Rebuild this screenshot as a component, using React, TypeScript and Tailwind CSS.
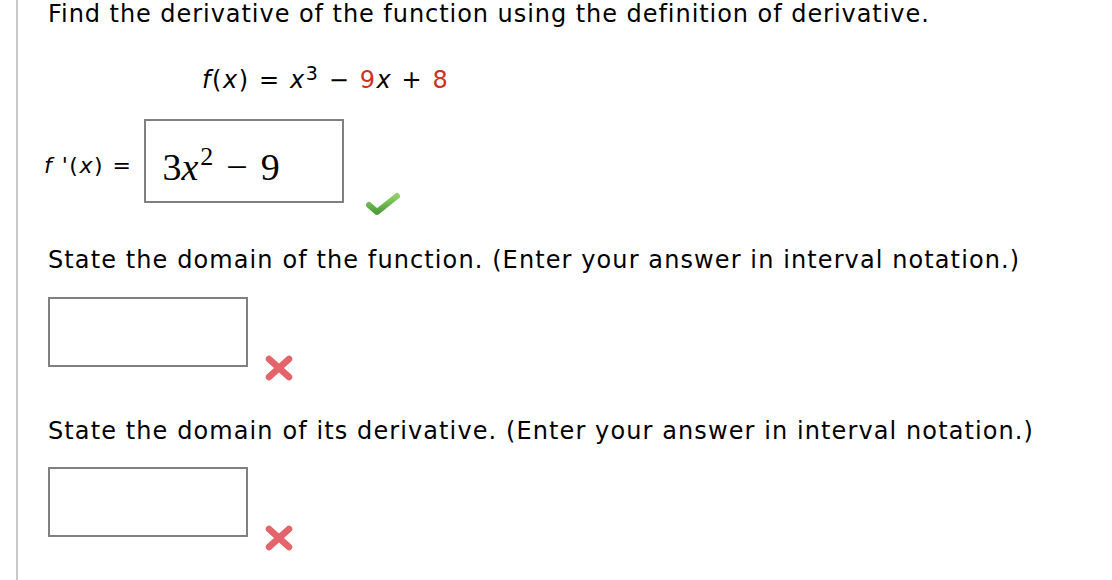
import React from "react";

const sans = { fontFamily: '"DejaVu Sans", Verdana, sans-serif' };

function Check() {
  return (
    <svg width="38" height="26" viewBox="0 0 38 26" className="block">
      <defs>
        <linearGradient id="cg" x1="0" y1="0" x2="0" y2="1">
          <stop offset="0" stopColor="#8fd16a" />
          <stop offset="1" stopColor="#4f9e3a" />
        </linearGradient>
      </defs>
      <path d="M5 14 L13 21 L33 5" fill="none" stroke="url(#cg)" strokeWidth="6" strokeLinecap="round" strokeLinejoin="round" />
    </svg>
  );
}

function Cross() {
  return (
    <svg width="30" height="28" viewBox="0 0 30 28" className="block">
      <g stroke="#e0545a" strokeWidth="6.5" strokeLinecap="round" opacity="0.9">
        <path d="M5 5 L25 23" />
        <path d="M25 5 L5 23" />
      </g>
    </svg>
  );
}

export default function App() {
  return (
    <div className="w-[1112px] min-h-[580px] bg-white text-black" style={sans}>
      <div className="ml-[16px] min-h-[580px] border-l-2 border-[#c8c8c8] pl-[30px]">
        <p className="text-[24px] leading-[28px] tracking-[0.95px] whitespace-nowrap">
          Find the derivative of the function using the definition of derivative.
        </p>

        <p className="mt-[38px] pl-[154px] text-[24px] leading-[28px] tracking-[1.6px] whitespace-nowrap">
          <span className="italic">f</span>(<span className="italic">x</span>) = <span className="italic">x</span>
          <span className="relative top-[-8px] text-[19px]">3</span> − <span className="text-[#cc3322]">9</span>
          <span className="italic">x</span> + <span className="text-[#cc3322]">8</span>
        </p>

        <div className="mt-[24px] flex items-start">
          <div className="mt-[35px] ml-[-4px] text-[22px] leading-[24px] tracking-[1.5px] whitespace-nowrap">
            <span className="italic">f</span> '(<span className="italic">x</span>) =
          </div>
          <div className="ml-[12px] h-[84px] w-[200px] border-2 border-[#808080] pl-[16px] pt-[26px]">
            <div
              className="text-[38px] leading-[40px] whitespace-nowrap"
              style={{ fontFamily: '"Liberation Serif", "Times New Roman", serif' }}
            >
              3<span className="italic">x</span>
              <span className="relative top-[-15px] ml-[2px] text-[26px]">2</span>
              <span className="mx-[13px]">−</span>9
            </div>
          </div>
          <div className="ml-[20px] mt-[72px]">
            <Check />
          </div>
        </div>

        <p className="mt-[29px] text-[24px] leading-[28px] tracking-[1.1px] whitespace-nowrap">
          State the domain of the function. (Enter your answer in interval notation.)
        </p>
        <div className="mt-[23px] flex items-start">
          <div className="h-[70px] w-[200px] border-2 border-[#808080]" />
          <div className="ml-[16px] mt-[57px]">
            <Cross />
          </div>
        </div>

        <p className="mt-[35px] text-[24px] leading-[28px] tracking-[1.1px] whitespace-nowrap">
          State the domain of its derivative. (Enter your answer in interval notation.)
        </p>
        <div className="mt-[22px] flex items-start">
          <div className="h-[70px] w-[200px] border-2 border-[#808080]" />
          <div className="ml-[16px] mt-[57px]">
            <Cross />
          </div>
        </div>
      </div>
    </div>
  );
}
